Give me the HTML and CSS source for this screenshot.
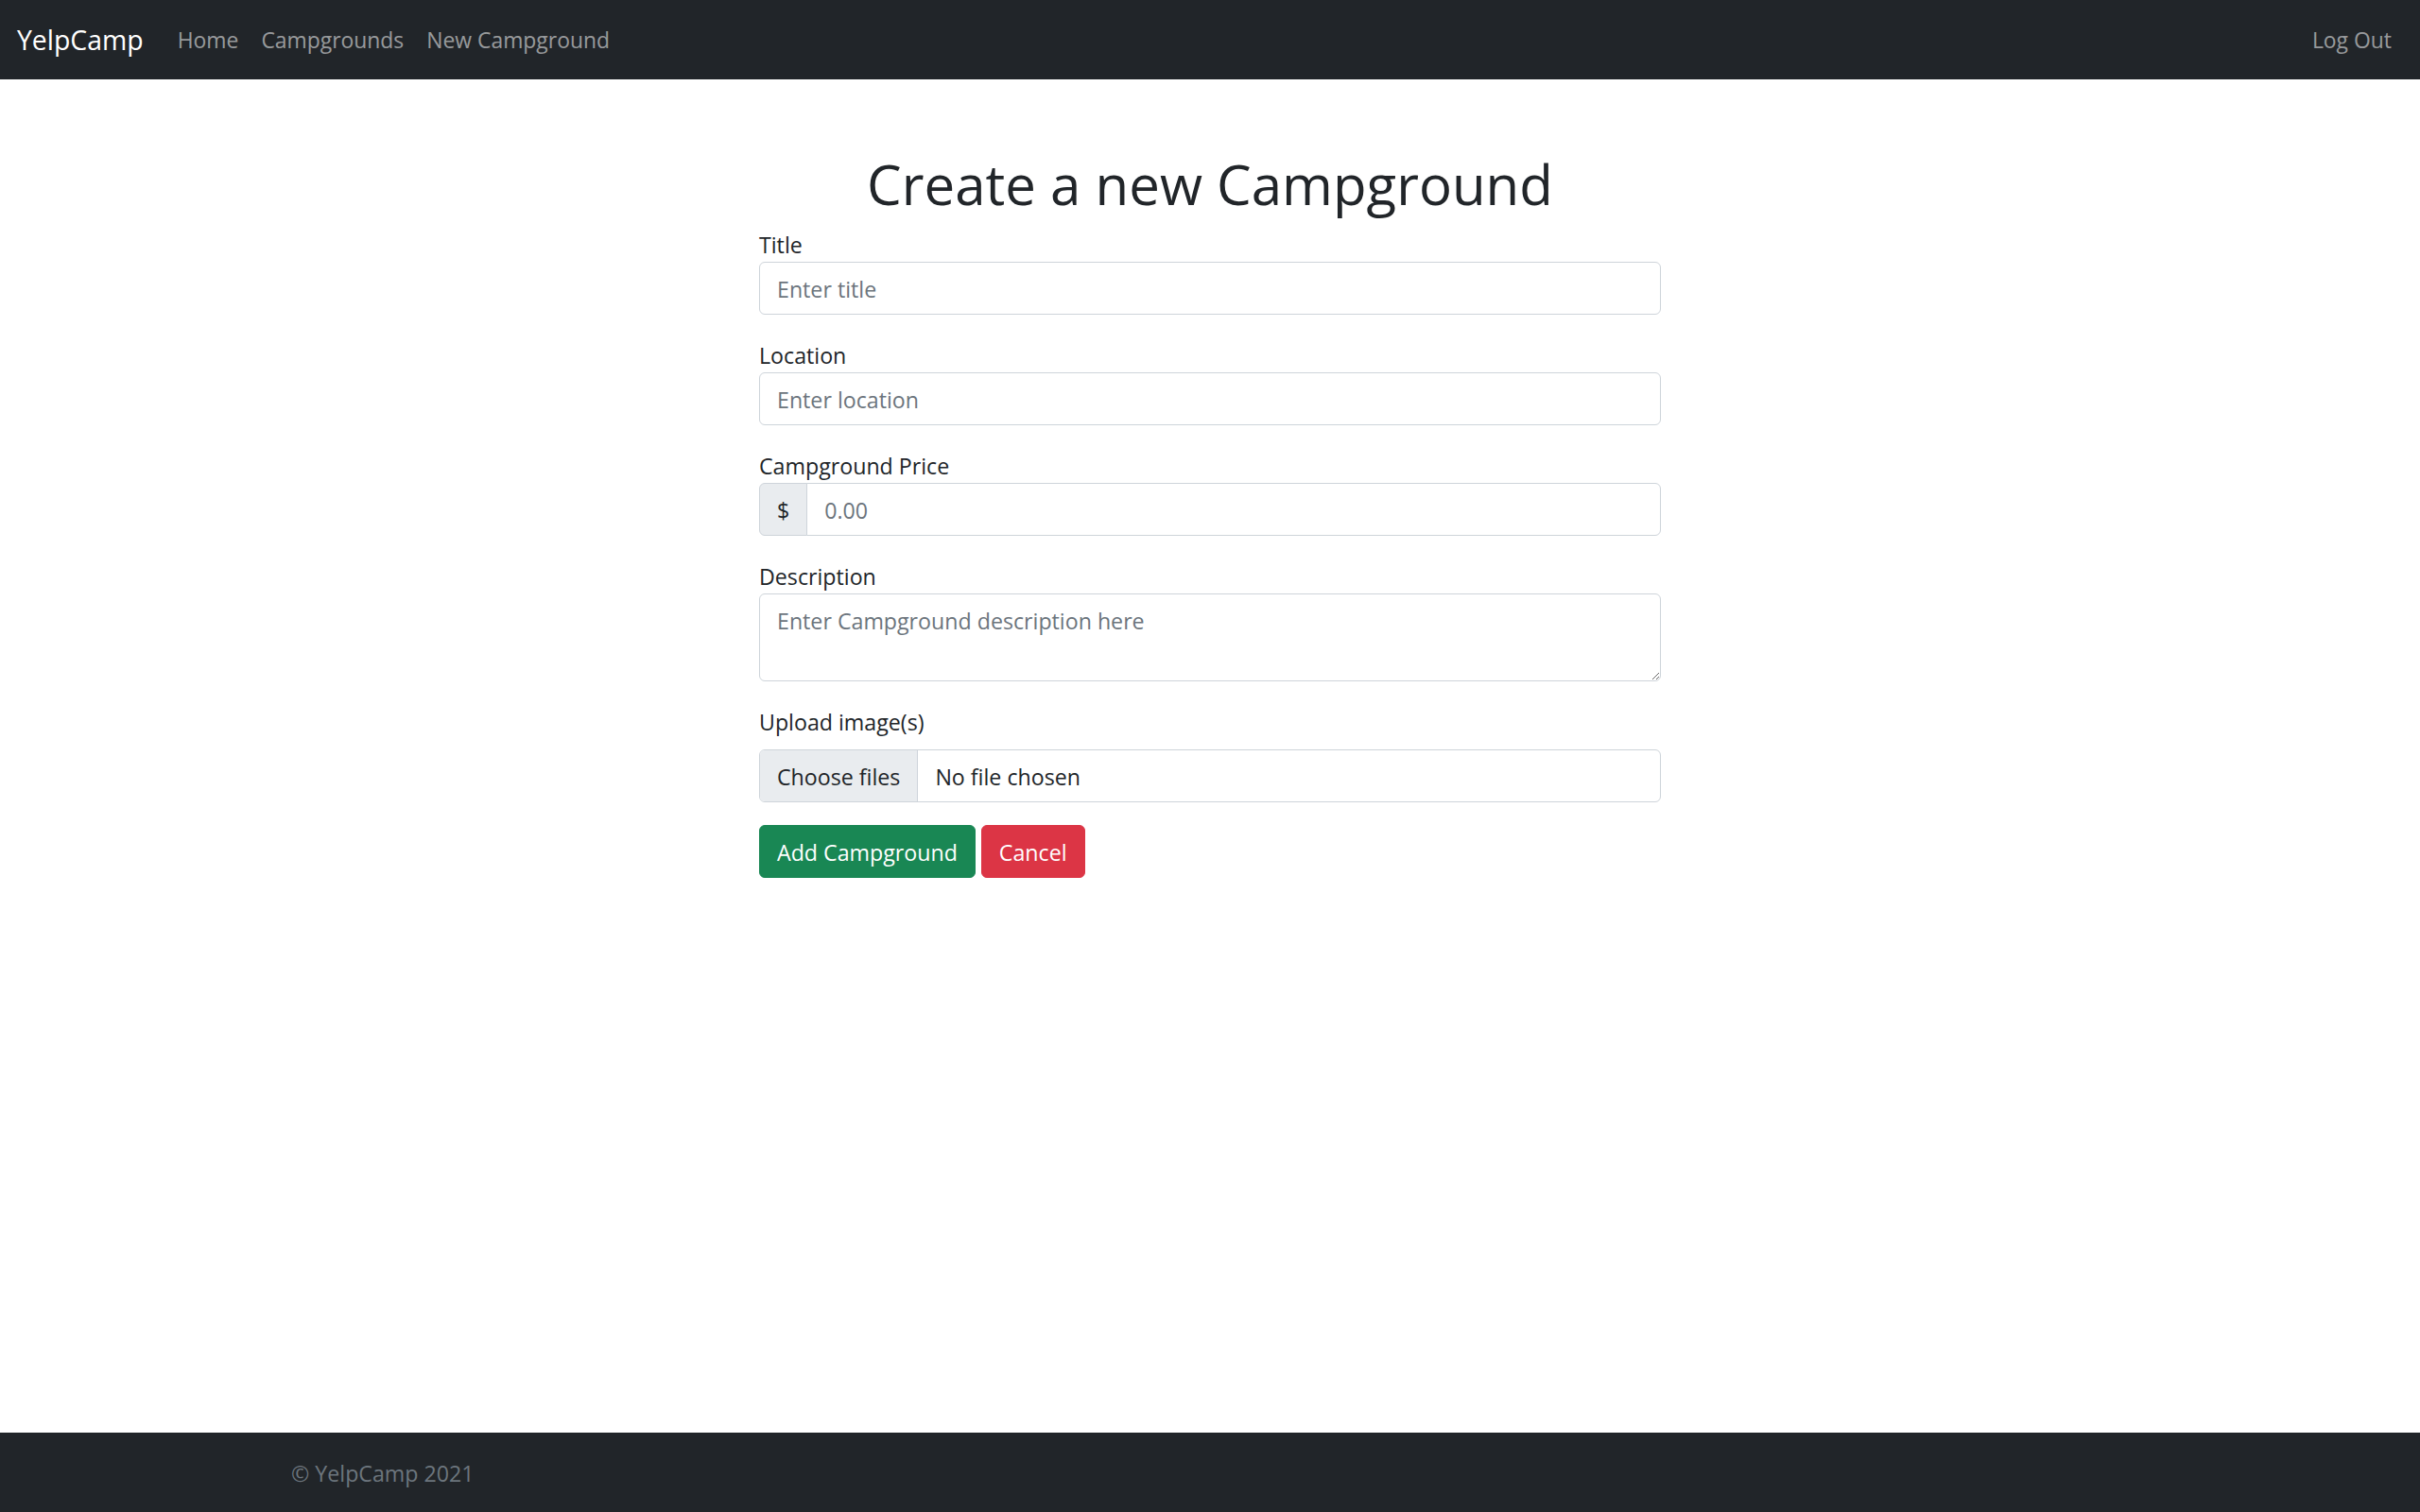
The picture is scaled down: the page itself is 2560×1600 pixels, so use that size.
FILE: index.html
```html
<!DOCTYPE html>
<html lang="en">
<head>
<meta charset="utf-8">
<title>YelpCamp - New Campground</title>
<link rel="stylesheet" href="styles.css">
</head>
<body class="page">
  <nav class="navbar">
    <div class="navbar-inner">
      <a class="brand" href="#">YelpCamp</a>
      <div class="nav-links">
        <a class="nav-link" href="#">Home</a>
        <a class="nav-link" href="#">Campgrounds</a>
        <a class="nav-link" href="#">New Campground</a>
      </div>
      <div class="nav-links nav-right">
        <a class="nav-link" href="#">Log Out</a>
      </div>
    </div>
  </nav>

  <main class="container main">
    <div class="form-col">
      <h1 class="title">Create a new Campground</h1>
      <form class="form">
        <div class="group">
          <label class="label" for="title">Title</label>
          <input class="control" type="text" id="title" placeholder="Enter title">
        </div>
        <div class="group">
          <label class="label" for="location">Location</label>
          <input class="control" type="text" id="location" placeholder="Enter location">
        </div>
        <div class="group">
          <label class="label" for="price">Campground Price</label>
          <div class="input-group">
            <span class="addon">$</span>
            <input class="control control-grouped" type="text" id="price" placeholder="0.00">
          </div>
        </div>
        <div class="group">
          <label class="label" for="description">Description</label>
          <textarea class="control textarea" id="description" rows="2" placeholder="Enter Campground description here"></textarea>
        </div>
        <div class="group">
          <label class="label label-spaced" for="image">Upload image(s)</label>
          <label class="file-input" for="image">
            <span class="file-btn">Choose files</span>
            <span class="file-name">No file chosen</span>
            <input class="file-hidden" type="file" id="image" multiple>
          </label>
        </div>
        <div class="actions">
          <button class="btn btn-success" type="button">Add Campground</button>
          <a class="btn btn-danger" href="#">Cancel</a>
        </div>
      </form>
    </div>
  </main>

  <footer class="footer">
    <div class="container">
      <span class="muted">&copy; YelpCamp 2021</span>
    </div>
  </footer>
</body>
</html>
```

FILE: styles.css
```css
* { box-sizing: border-box; }

html, body { height: 100%; }

body.page {
  margin: 0;
  min-height: 100vh;
  display: flex;
  flex-direction: column;
  font-family: "Open Sans", "Noto Sans", "Liberation Sans", sans-serif;
  font-size: 23.2px;
  line-height: 36px;
  color: #212529;
  background: #fff;
}

a { text-decoration: none; }

.navbar {
  background: #212529;
  padding: 12px 0;
}

.navbar-inner {
  display: flex;
  align-items: center;
  padding: 0 18px;
}

.brand {
  color: #fff;
  font-size: 28.4px;
  line-height: 45px;
  padding: 7.5px 0;
  margin-right: 24px;
}

.nav-links {
  display: flex;
}

.nav-right { margin-left: auto; }

.nav-link {
  color: rgba(255, 255, 255, 0.55);
  padding: 13px 12px 11px;
  font-size: 22.9px;
  line-height: 36px;
}

.container {
  width: 100%;
  max-width: 1980px;
  margin: 0 auto;
  padding: 0 18px;
}

.main { margin-top: 72px; }

.form-col {
  width: 954px;
  margin-left: 495px;
}

.title {
  margin: 0 0 12px;
  padding-top: 3px;
  height: 75px;
  font-size: 58.2px;
  font-weight: 500;
  line-height: 72px;
  text-align: center;
}

.form { margin: 0; }

.group { margin-bottom: 24px; }

.label {
  display: inline-block;
  padding-top: 2px;
  line-height: 34px;
}

.title + .form .group:first-child { margin-top: -3px; }

.label-spaced { margin-bottom: 12px; }

.control {
  display: block;
  width: 100%;
  padding: 10px 18px 8px;
  font: inherit;
  line-height: 36px;
  color: #212529;
  background: #fff;
  border: 1px solid #ced4da;
  border-radius: 6px;
  outline: none;
}

.control::placeholder { color: #6c757d; opacity: 1; }

.textarea {
  height: 93px;
  min-height: 93px;
  resize: vertical;
}

.input-group {
  display: flex;
  align-items: stretch;
}

.addon {
  display: flex;
  align-items: center;
  padding: 10px 18px 8px;
  line-height: 36px;
  background: #e9ecef;
  border: 1px solid #ced4da;
  border-radius: 6px 0 0 6px;
  color: #212529;
}

.control-grouped {
  flex: 1;
  margin-left: -1px;
  border-radius: 0 6px 6px 0;
}

.file-input {
  display: flex;
  width: 100%;
  border: 1px solid #ced4da;
  border-radius: 6px;
  overflow: hidden;
  line-height: 36px;
  cursor: pointer;
}

.file-btn {
  padding: 10px 18px 8px;
  background: #e9ecef;
  border-right: 1px solid #ced4da;
  color: #212529;
}

.file-name {
  padding: 10px 18px 8px;
  color: #212529;
}

.file-hidden { display: none; }

.actions {
  display: flex;
  gap: 6px;
}

.btn {
  display: inline-block;
  padding: 10px 18px 8px;
  font: inherit;
  line-height: 36px;
  color: #fff;
  border: 1px solid transparent;
  border-radius: 6px;
  cursor: pointer;
}

.btn-success { background: #198754; border-color: #198754; }
.btn-danger { background: #dc3545; border-color: #dc3545; }

.footer {
  margin-top: auto;
  padding: 25px 0 23px;
  background: #212529;
  line-height: 36px;
}

.muted { color: #6c757d; }
```
